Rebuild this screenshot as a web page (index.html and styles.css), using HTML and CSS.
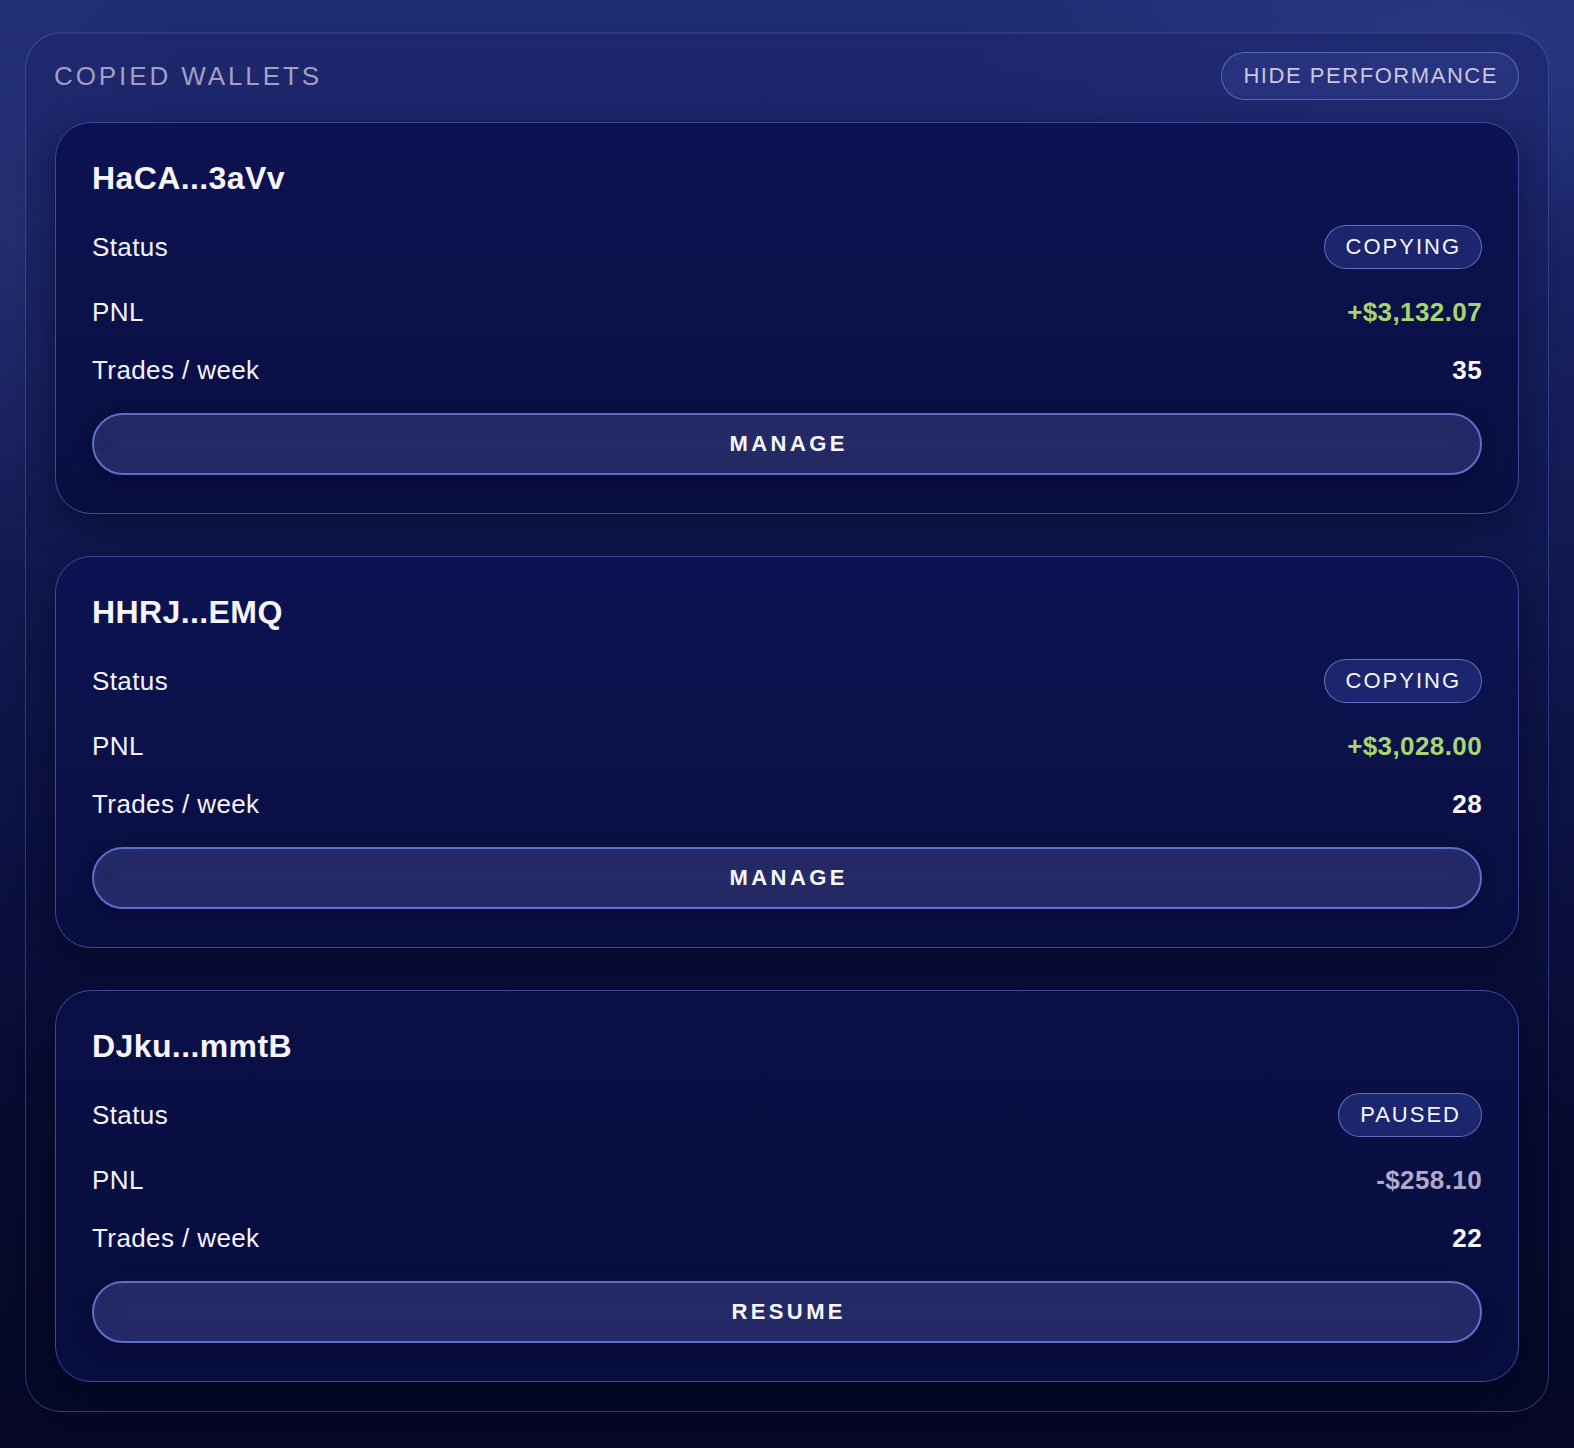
FILE: index.html
```html
<!DOCTYPE html>
<html lang="en">
<head>
<meta charset="utf-8">
<title>Copied Wallets</title>
<link rel="stylesheet" href="styles.css">
</head>
<body>
<section class="panel">
  <header class="panel-head">
    <h2 class="panel-title">COPIED WALLETS</h2>
    <button class="ghost-pill">HIDE PERFORMANCE</button>
  </header>
  <div class="cards">
    <article class="card">
      <h3 class="wallet">HaCA...3aVv</h3>
      <div class="row row-status"><span class="label">Status</span><span class="pill">COPYING</span></div>
      <div class="row"><span class="label">PNL</span><span class="value pos">+$3,132.07</span></div>
      <div class="row"><span class="label">Trades / week</span><span class="value">35</span></div>
      <button class="action">MANAGE</button>
    </article>
    <article class="card">
      <h3 class="wallet">HHRJ...EMQ</h3>
      <div class="row row-status"><span class="label">Status</span><span class="pill">COPYING</span></div>
      <div class="row"><span class="label">PNL</span><span class="value pos">+$3,028.00</span></div>
      <div class="row"><span class="label">Trades / week</span><span class="value">28</span></div>
      <button class="action">MANAGE</button>
    </article>
    <article class="card card-last">
      <h3 class="wallet">DJku...mmtB</h3>
      <div class="row row-status"><span class="label">Status</span><span class="pill">PAUSED</span></div>
      <div class="row"><span class="label">PNL</span><span class="value neg">-$258.10</span></div>
      <div class="row"><span class="label">Trades / week</span><span class="value">22</span></div>
      <button class="action">RESUME</button>
    </article>
  </div>
</section>
</body>
</html>
```

FILE: styles.css
```css
* { box-sizing: border-box; }

html, body {
  margin: 0;
  padding: 0;
}

body {
  width: 1574px;
  min-height: 1448px;
  font-family: "Liberation Sans", Arial, Helvetica, sans-serif;
  color: #f3f3f9;
  background:
    radial-gradient(ellipse 700px 300px at 1450px 60px, rgba(60, 80, 170, 0.35), transparent 70%),
    radial-gradient(ellipse 300px 500px at 0px 220px, rgba(70, 80, 150, 0.25), transparent 70%),
    linear-gradient(180deg, #1f2b72 0%, #17215f 20%, #0c1244 55%, #070a2e 80%, #050724 100%);
  padding: 32px 25px 37px;
}

.panel {
  border: 1px solid rgba(78, 96, 184, 0.55);
  border-radius: 36px;
  padding: 19px 29px 29px;
  background: linear-gradient(180deg, rgba(30, 40, 110, 0.75) 0%, rgba(18, 26, 85, 0.55) 30%, rgba(10, 15, 58, 0.55) 65%, rgba(6, 9, 40, 0.7) 100%);
  box-shadow: inset 0 1px 0 rgba(120, 140, 230, 0.15);
}

.panel-head {
  display: flex;
  align-items: center;
  justify-content: space-between;
  height: 48px;
  margin-bottom: 22px;
}

.panel-title {
  margin: 0 0 0 -1px;
  font-size: 26px;
  font-weight: 400;
  letter-spacing: 2.9px;
  color: #a49ec4;
  line-height: 30px;
}

.ghost-pill {
  height: 48px;
  padding: 0 20px 0 21px;
  border: 1.5px solid rgba(128, 142, 214, 0.6);
  border-radius: 24px;
  background: rgba(62, 76, 160, 0.28);
  color: #cbc7de;
  font-family: inherit;
  font-size: 22px;
  letter-spacing: 1.55px;
  line-height: 1;
}

.cards {
  display: flex;
  flex-direction: column;
  gap: 42px;
}

.card {
  display: flex;
  flex-direction: column;
  gap: 28px;
  padding: 36px 36px 38px;
  border: 1px solid #3b4a9e;
  border-radius: 36px;
  background: linear-gradient(180deg, #0d1352 0%, #0b1149 50%, #090e42 100%);
  box-shadow: 0 14px 36px rgba(2, 4, 24, 0.45);
}

.card-last {
  background: linear-gradient(180deg, #0a0f46 0%, #080d3f 100%);
}

.wallet {
  margin: 0;
  font-size: 32px;
  font-weight: 700;
  letter-spacing: 0.4px;
  line-height: 38px;
  color: #f6f5fb;
}

.row {
  display: flex;
  align-items: center;
  justify-content: space-between;
  height: 30px;
}

.row-status {
  height: 44px;
}

.label {
  font-size: 26px;
  letter-spacing: 0.4px;
  line-height: 30px;
  color: #f3f3f9;
}

.value {
  font-size: 26px;
  font-weight: 700;
  letter-spacing: 0.4px;
  line-height: 30px;
  color: #f6f6fb;
}

.value.pos { color: #a5d66f; }
.value.neg { color: #b4a8c9; }

.pill {
  display: inline-flex;
  align-items: center;
  height: 44px;
  padding: 0 20px 0 21px;
  border: 1.5px solid rgba(108, 124, 204, 0.85);
  border-radius: 22px;
  background: #1c266e;
  font-size: 22px;
  letter-spacing: 2px;
  color: #f4f4fa;
  line-height: 1;
}

.action {
  height: 62px;
  width: 100%;
  border: 2px solid #5d70c6;
  border-radius: 31px;
  background: #262c68;
  box-shadow:
    inset 0 0 14px 6px rgba(38, 46, 110, 0.9),
    inset 0 0 30px rgba(20, 24, 70, 0.6),
    0 6px 18px rgba(2, 4, 30, 0.35);
  color: #f7f7fc;
  font-family: inherit;
  font-size: 22px;
  font-weight: 700;
  letter-spacing: 3.4px;
  padding: 0 0 0 3.4px;
  line-height: 1;
}
```
